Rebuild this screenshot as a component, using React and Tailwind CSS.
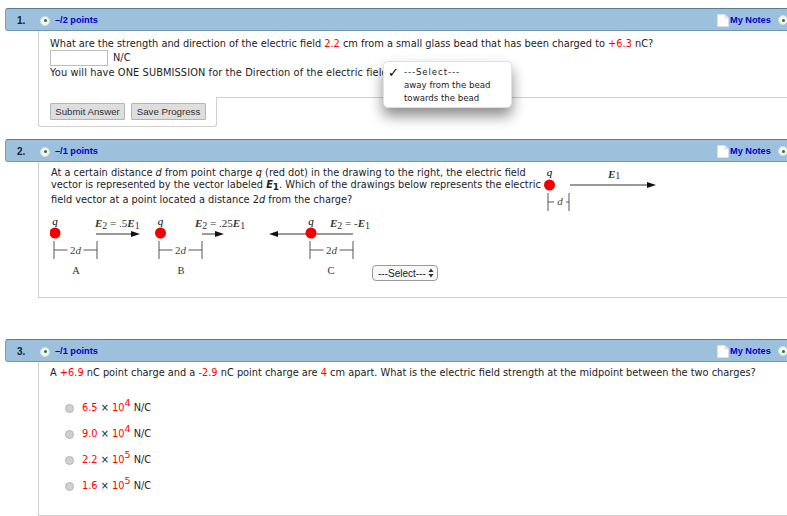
const RED = 'text-[#ff0000]';

function Dot({ className = '' }) {
  return (
    <span className={`flex h-[10px] w-[10px] shrink-0 items-center justify-center rounded-full border border-[#dcdcdc] bg-[#f6f6f6] ${className}`}>
      <span className="h-[3px] w-[3px] rounded-full bg-[#0a8a1e]" />
    </span>
  );
}

function NoteIcon() {
  return (
    <svg width="12" height="13" viewBox="0 0 12 13" className="shrink-0">
      <path d="M0.5 0.5H8L11.5 4V12.5H0.5Z" fill="#fff" stroke="#d8e2ea" strokeWidth="0.7" />
      <path d="M8 0.5V4H11.5" fill="#e6e6e6" stroke="#c9c9c9" strokeWidth="0.5" />
    </svg>
  );
}

function Header({ num, points }) {
  return (
    <div className="ml-[5px] flex h-[23px] w-[790px] shrink-0 items-center rounded-l-[3px] border-t border-b border-l border-t-[#5d7c90] border-b-[#7396b0] border-l-[#7d9db5] bg-[#9dc0dc] pt-[2px] font-['Liberation_Sans',sans-serif] text-[9.2px] font-bold">
      <span className="ml-[11px] w-[23px] text-[10px] text-[#10203a]">{num}.</span>
      <Dot />
      <span className="ml-[5px] text-[#0000c8]">{points} points</span>
      <span className="ml-auto flex items-center">
        <NoteIcon />
        <span className="ml-[1px] w-[48px] text-[#0000c8]">My Notes</span>
        <Dot />
        <span className="w-[7px]" />
      </span>
    </div>
  );
}

function Charge({ cx }) {
  return (
    <>
      <text x={cx} y="225" textAnchor="middle" fontStyle="italic" fontSize="11">q</text>
      <circle cx={cx} cy="233" r="5.5" fill="#f00000" />
    </>
  );
}

function Bracket({ x1, x2 }) {
  const mid = (x1 + x2) / 2;
  return (
    <>
      <path d={`M${x1} 241V259M${x2} 241V259M${x1} 250H${mid - 8}M${mid + 8} 250H${x2}`} stroke="#444" strokeWidth="0.9" fill="none" />
      <text x={mid} y="254" textAnchor="middle" fontSize="11" fill="#444">2<tspan fontStyle="italic">d</tspan></text>
    </>
  );
}

function E2({ x, value }) {
  return (
    <text x={x} y="227" fontSize="11" fill="#333">
      <tspan fontWeight="bold" fontStyle="italic">E</tspan>
      <tspan fontSize="10" dy="2">2</tspan>
      <tspan dy="-2"> = {value}</tspan>
      <tspan fontWeight="bold" fontStyle="italic">E</tspan>
      <tspan fontSize="10" dy="2">1</tspan>
    </text>
  );
}

function Drawings() {
  return (
    <svg width="322" height="70" viewBox="50 214 322 70" className="shrink-0 font-['Liberation_Serif',serif]">
      <Charge cx={55} />
      <E2 x={95} value=".5" />
      <path d="M96 234H134" stroke="#333" strokeWidth="1" />
      <path d="M131 231L140 234L131 237Z" fill="#111" />
      <Bracket x1={54} x2={97} />
      <text x="76" y="274" textAnchor="middle" fontSize="10.5" fill="#333">A</text>

      <Charge cx={160.5} />
      <E2 x={195} value=".25" />
      <path d="M202 234H219" stroke="#333" strokeWidth="1" />
      <path d="M215 231L224 234L215 237Z" fill="#111" />
      <Bracket x1={159} x2={202} />
      <text x="181" y="274" textAnchor="middle" fontSize="10.5" fill="#333">B</text>

      <path d="M275 234H353" stroke="#333" strokeWidth="1" />
      <path d="M278 231L269 234L278 237Z" fill="#111" />
      <Charge cx={311} />
      <E2 x={330} value="-" />
      <Bracket x1={310} x2={353} />
      <text x="331" y="274" textAnchor="middle" fontSize="10.5" fill="#333">C</text>
    </svg>
  );
}

function ReferenceDrawing() {
  return (
    <svg width="120" height="50" viewBox="541 165 120 50" className="mt-[3px] shrink-0 font-['Liberation_Serif',serif]">
      <text x="549.5" y="176" textAnchor="middle" fontStyle="italic" fontSize="11">q</text>
      <circle cx="549.5" cy="185" r="5.5" fill="#f00000" />
      <path d="M570 185H650" stroke="#333" strokeWidth="1" />
      <path d="M647 182L656 185L647 188Z" fill="#111" />
      <text x="608" y="178" fontSize="11" fill="#333">
        <tspan fontWeight="bold" fontStyle="italic">E</tspan>
        <tspan fontSize="10" dy="1">1</tspan>
      </text>
      <path d="M548 193V211M569 193V211M548 202H554M566 202H569" stroke="#444" strokeWidth="0.9" fill="none" />
      <text x="560" y="205" textAnchor="middle" fontSize="11" fontStyle="italic" fill="#444">d</text>
    </svg>
  );
}

function SelectBox() {
  return (
    <div className="mb-[3px] flex h-[16px] w-[66px] shrink-0 items-center justify-between rounded-[4px] border border-[#9a9a9a] bg-[#f8f8f8] pr-[3px] pl-[5px] font-['Liberation_Sans',sans-serif] text-[10px] text-[#222]">
      <span>---Select---</span>
      <svg width="6" height="10" viewBox="0 0 6 10">
        <path d="M3 0.5L5.5 4H0.5ZM3 9.5L0.5 6H5.5Z" fill="#333" />
      </svg>
    </div>
  );
}

function Choice({ value, exp }) {
  return (
    <label className="flex h-[26px] items-center">
      <input type="radio" disabled className="mt-[1px] h-[9px] w-[9px] appearance-none rounded-full border border-[#b5b5b5] bg-[#d0d0d0]" />
      <span className="ml-[8px]">
        <span className={RED}>{value}</span> × <span className={RED}>10<sup className="text-[9.5px]">{exp}</sup></span> N/C
      </span>
    </label>
  );
}

function PopupMenu() {
  return (
    <div className="absolute top-[61px] left-[383px] z-10 h-[47px] w-[129px] rounded-[5px] border border-[#e2e2e2] bg-white pt-[4px] text-[8.6px] leading-[13px] text-[#222] shadow-[0_8px_14px_rgba(0,0,0,0.45)]">
      <div className="flex">
        <span className="w-[20px] pl-[4px] text-[13px] font-bold text-black">✓</span>
        <span className="tracking-[0.9px]">---Select---</span>
      </div>
      <div className="pl-[20px]">away from the bead</div>
      <div className="pl-[20px]">towards the bead</div>
    </div>
  );
}

function Button({ children }) {
  return (
    <button className="h-[17px] w-[75px] rounded-[1px] border border-[#b5b5b5] bg-[#dedede] pt-[1px] font-['Liberation_Sans',sans-serif] text-[9.7px] text-[#333]">
      {children}
    </button>
  );
}

export default function App() {
  return (
    <div className="relative h-[516px] w-[787px] overflow-hidden bg-white pt-[8px] font-['DejaVu_Sans',sans-serif] text-[9.8px] text-[#222]">
      <PopupMenu />

      {/* question 1 */}
      <Header num="1" points="–/2" />
      <div className="ml-[38px] h-[66px] border-l border-[#cfcfcf] pt-[6px] pl-[11px]">
        <p className="h-[13px] leading-[13px]">
          What are the strength and direction of the electric field <span className={RED}>2.2</span> cm from a small glass bead that has been charged to <span className={RED}>+6.3</span> nC?
        </p>
        <div className="flex h-[16px] items-center">
          <input className="h-[16px] w-[58px] border border-[#bdbdbd] bg-white" />
          <span className="ml-[5px]">N/C</span>
        </div>
        <p className="h-[13px] whitespace-nowrap leading-[13px] tracking-[0.1px]">You will have ONE SUBMISSION for the Direction of the electric field.</p>
      </div>
      <div className="ml-[38px] flex h-[30px]">
        <div className="flex h-[30px] w-[179px] gap-[6px] rounded-b-[3px] border-r border-b border-l border-[#cfcfcf] pt-[6px] pl-[11px]">
          <Button>Submit Answer</Button>
          <Button>Save Progress</Button>
        </div>
        <div className="h-0 flex-1 border-t border-[#cfcfcf]" />
      </div>

      {/* question 2 */}
      <div className="mt-[12px]">
        <Header num="2" points="–/1" />
        <div className="ml-[38px] h-[136px] border-b border-l border-[#cfcfcf] pl-[11px]">
          <div className="flex">
            <div className="w-[491px] shrink-0 pt-[5px] pl-[1px] leading-[12px]">
              <div className="h-[12px] whitespace-nowrap">At a certain distance <i>d</i> from point charge <i>q</i> (red dot) in the drawing to the right, the electric field</div>
              <div className="h-[15px] whitespace-nowrap">vector is represented by the vector labeled <b><i>E</i><sub className="text-[9px]">1</sub></b>. Which of the drawings below represents the electric</div>
              <div className="h-[12px] whitespace-nowrap">field vector at a point located a distance 2<i>d</i> from the charge?</div>
            </div>
            <ReferenceDrawing />
          </div>
          <div className="-mt-[1px] flex items-end">
            <Drawings />
            <SelectBox />
          </div>
        </div>
      </div>

      {/* question 3 */}
      <div className="mt-[41px]">
        <Header num="3" points="–/1" />
        <div className="ml-[38px] h-[154px] border-b border-l border-[#cfcfcf] pl-[11px]">
          <p className="pt-[4px] leading-[13px] whitespace-nowrap">
            A <span className={RED}>+6.9</span> nC point charge and a <span className={RED}>-2.9</span> nC point charge are <span className={RED}>4</span> cm apart. What is the electric field strength at the midpoint between the two charges?
          </p>
          <div className="mt-[16px] ml-[15px]">
            <Choice value="6.5" exp="4" />
            <Choice value="9.0" exp="4" />
            <Choice value="2.2" exp="5" />
            <Choice value="1.6" exp="5" />
          </div>
        </div>
      </div>
    </div>
  );
}
